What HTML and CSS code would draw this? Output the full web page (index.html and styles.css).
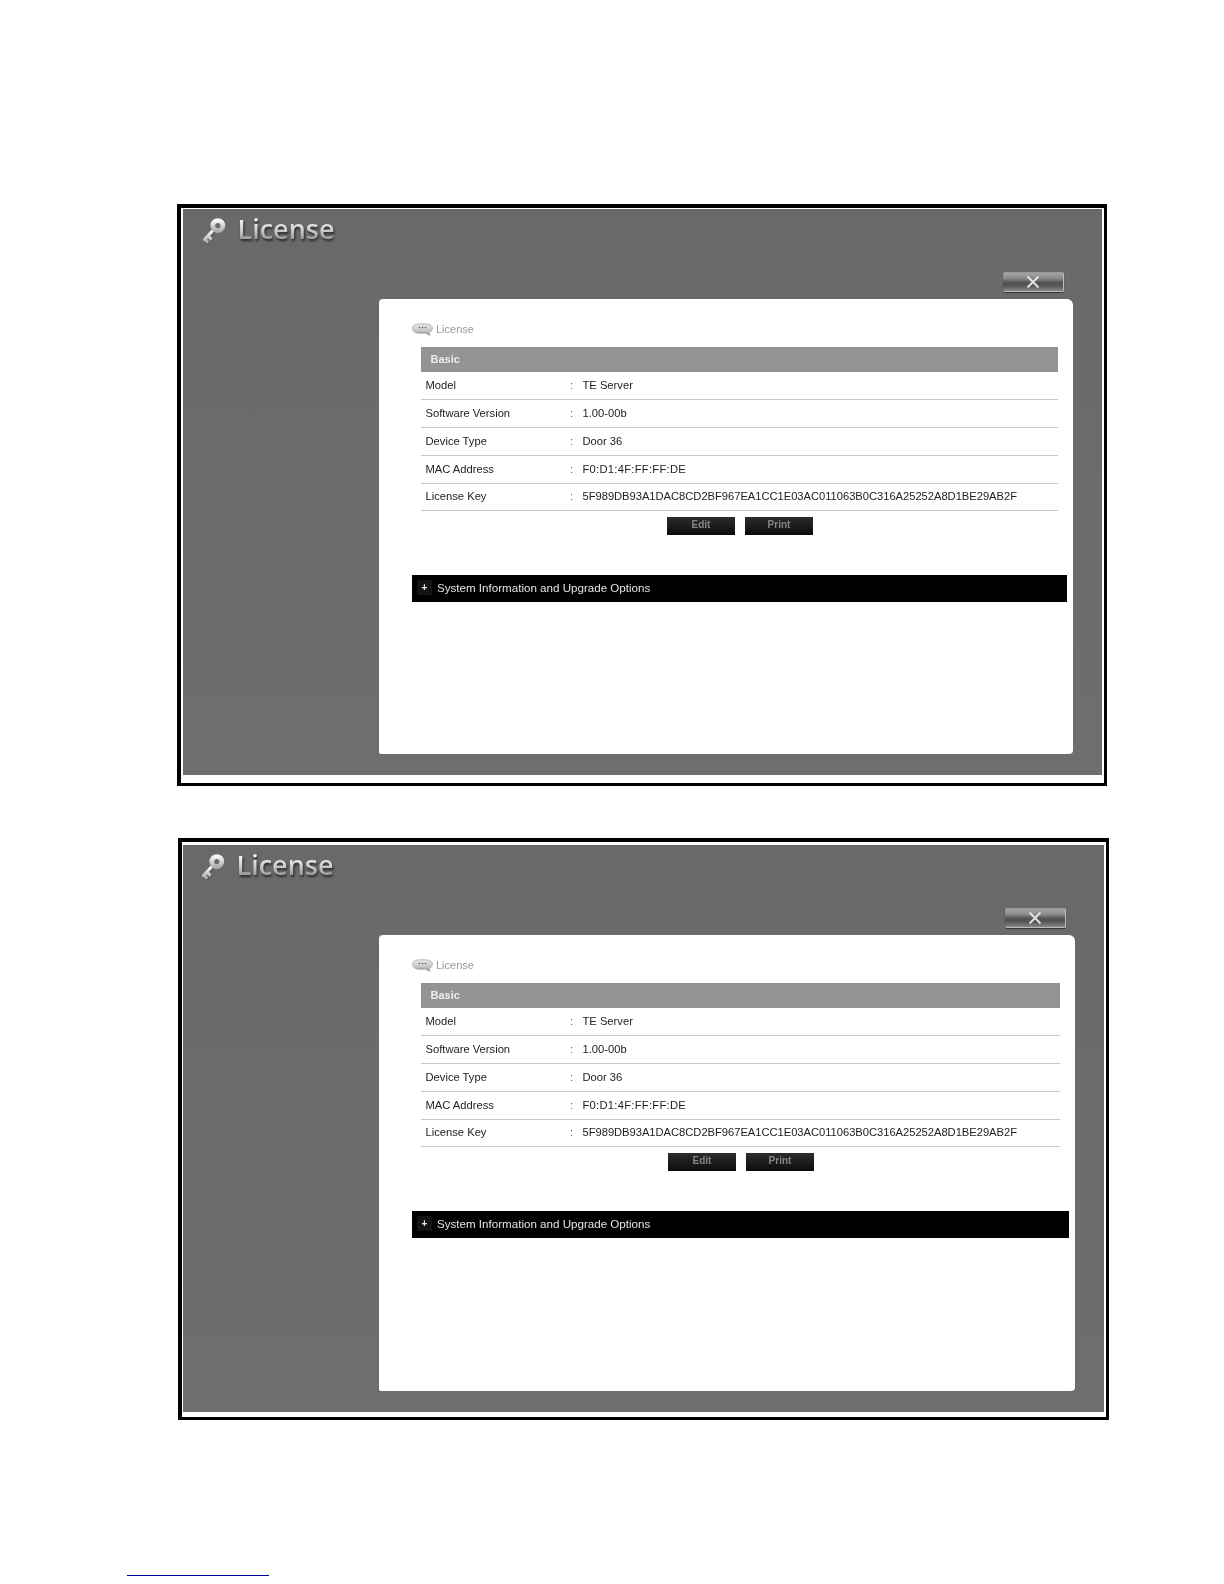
FILE: index.html
```html
<!DOCTYPE html>
<html lang="en">
<head>
<meta charset="utf-8">
<title>License</title>
<link rel="stylesheet" href="styles.css">
</head>
<body>
<svg class="defs" width="0" height="0" aria-hidden="true">
  <defs>
    <linearGradient id="keyfill" x1="0" y1="0" x2="0" y2="1">
      <stop offset="0" stop-color="#f6f6f6"/>
      <stop offset="1" stop-color="#b0b0b0"/>
    </linearGradient>
    <linearGradient id="bubblefill" x1="0" y1="0" x2="0" y2="1">
      <stop offset="0" stop-color="#e8e8e8"/>
      <stop offset=".6" stop-color="#c8c8c8"/>
      <stop offset="1" stop-color="#8e8e8e"/>
    </linearGradient>
    <symbol id="key" viewBox="0 0 25 26">
      <path d="M10 13.500 L2.800 21.200 M6 17.800 L8.800 20.400 M3.200 20.800 L5.400 23.200" fill="none" stroke="#3c3c3c" stroke-width="3.400" stroke-linecap="round" opacity=".4" transform="translate(1 1.200)"/>
      <path d="M10 13.500 L2.500 21.500 M5.800 18 L8.800 20.700 M3 21 L5.300 23.500" fill="none" stroke="url(#keyfill)" stroke-width="3.200" stroke-linecap="round"/>
      <circle cx="15.800" cy="7.600" r="5" fill="none" stroke="url(#keyfill)" stroke-width="4.800"/>
    </symbol>
    <symbol id="bubble" viewBox="0 0 21 13">
      <path d="M8 .8h5c4.500 0 7.500 1.500 7.500 4.300 0 2.200-1.600 3.600-3.500 4.300 .1 1 .6 2 1.300 2.900-1.700-.2-3.200-1-4.200-2.100-.6 .1-1.300 .1-2 .1H8C3.500 10.300 .5 8.300 .5 5.300S3.500 .8 8 .8z" fill="url(#bubblefill)" stroke="#8c8c8c" stroke-width=".5"/>
      <circle cx="7.500" cy="4.400" r=".75" fill="#555"/>
      <circle cx="10.500" cy="4.400" r=".75" fill="#555"/>
      <circle cx="13.500" cy="4.400" r=".75" fill="#555"/>
    </symbol>
    <symbol id="cross" viewBox="0 0 14 14">
      <path d="M1.500 1.500 L12.500 12.500 M12.500 1.500 L1.500 12.500" fill="none" stroke="#e4e4e4" stroke-width="1.800"/>
    </symbol>
  </defs>
</svg>

<section class="frame frame-a">
  <div class="stage">
    <header class="title-row">
      <svg class="key-icon"><use href="#key"/></svg>
      <h1 class="title">License</h1>
    </header>
    <div class="close-row">
      <button class="close-btn" type="button" aria-label="Close"><svg class="cross-icon"><use href="#cross"/></svg></button>
    </div>
    <main class="panel">
      <div class="crumb"><svg class="bubble-icon"><use href="#bubble"/></svg><span>License</span></div>
      <div class="section-head">Basic</div>
      <dl class="info">
        <div class="info-row"><dt>Model</dt><dd class="colon">:</dd><dd>TE Server</dd></div>
        <div class="info-row"><dt>Software Version</dt><dd class="colon">:</dd><dd>1.00-00b</dd></div>
        <div class="info-row"><dt>Device Type</dt><dd class="colon">:</dd><dd>Door 36</dd></div>
        <div class="info-row"><dt>MAC Address</dt><dd class="colon">:</dd><dd class="mac">F0:D1:4F:FF:FF:DE</dd></div>
        <div class="info-row"><dt>License Key</dt><dd class="colon">:</dd><dd class="license-key">5F989DB93A1DAC8CD2BF967EA1CC1E03AC011063B0C316A25252A8D1BE29AB2F</dd></div>
      </dl>
      <div class="actions">
        <button class="action-btn" type="button">Edit</button>
        <button class="action-btn" type="button">Print</button>
      </div>
      <div class="expander"><span class="plus">+</span><span>System Information and Upgrade Options</span></div>
    </main>
  </div>
</section>

<section class="frame frame-b">
  <div class="stage">
    <header class="title-row">
      <svg class="key-icon"><use href="#key"/></svg>
      <h1 class="title">License</h1>
    </header>
    <div class="close-row">
      <button class="close-btn" type="button" aria-label="Close"><svg class="cross-icon"><use href="#cross"/></svg></button>
    </div>
    <main class="panel">
      <div class="crumb"><svg class="bubble-icon"><use href="#bubble"/></svg><span>License</span></div>
      <div class="section-head">Basic</div>
      <dl class="info">
        <div class="info-row"><dt>Model</dt><dd class="colon">:</dd><dd>TE Server</dd></div>
        <div class="info-row"><dt>Software Version</dt><dd class="colon">:</dd><dd>1.00-00b</dd></div>
        <div class="info-row"><dt>Device Type</dt><dd class="colon">:</dd><dd>Door 36</dd></div>
        <div class="info-row"><dt>MAC Address</dt><dd class="colon">:</dd><dd class="mac">F0:D1:4F:FF:FF:DE</dd></div>
        <div class="info-row"><dt>License Key</dt><dd class="colon">:</dd><dd class="license-key">5F989DB93A1DAC8CD2BF967EA1CC1E03AC011063B0C316A25252A8D1BE29AB2F</dd></div>
      </dl>
      <div class="actions">
        <button class="action-btn" type="button">Edit</button>
        <button class="action-btn" type="button">Print</button>
      </div>
      <div class="expander"><span class="plus">+</span><span>System Information and Upgrade Options</span></div>
    </main>
  </div>
</section>

<hr class="foot-rule">
</body>
</html>
```

FILE: styles.css
```css
* { box-sizing: border-box; }

html, body { margin: 0; background: #fff; }

body {
  padding-top: 204px;
  font-family: "Liberation Sans", Arial, sans-serif;
  color: #222;
}

.defs { position: absolute; }

.frame {
  height: 582px;
  background: #fff;
  border: 4px solid #000;
  border-right-width: 3px;
  border-bottom-width: 3px;
  filter: blur(0.35px);
}

.frame-a {
  width: 930px;
  margin-left: 177px;
  padding: 1px 2px 8px 2px;
}

.frame-b {
  width: 931px;
  margin-top: 52px;
  margin-left: 178px;
  padding: 3px 2px 5px 1px;
}

.stage {
  display: flex;
  flex-direction: column;
  height: 100%;
  padding: 0 29px 21px 0;
  background: linear-gradient(#696969, #6e6e6e);
}

.title-row {
  display: flex;
  align-items: flex-start;
  height: 63px;
  padding: 9px 0 0 19px;
}

.frame-b .title-row { padding-left: 18px; }

.key-icon { width: 25px; height: 26px; flex: none; }

.title {
  margin: -8px 0 0 10.5px;
  font-family: "Open Sans", sans-serif;
  font-size: 27px;
  font-weight: 600;
  line-height: 38px;
  background: linear-gradient(#f8f8f8 25%, #cacaca 55%, #929292 80%);
  -webkit-background-clip: text;
  background-clip: text;
  color: transparent;
  filter: drop-shadow(1px 2px 1px rgba(20, 20, 20, 0.75));
}

.close-row {
  display: flex;
  justify-content: flex-end;
  padding-right: 9px;
  margin-bottom: 7px;
}

.close-btn {
  display: flex;
  align-items: center;
  justify-content: center;
  width: 61px;
  height: 20px;
  padding: 0;
  border: 0;
  border-top: 1px solid #9c9c9c;
  border-right: 1px solid #bcbcbc;
  border-bottom: 1px solid #bcbcbc;
  border-radius: 2px;
  background: linear-gradient(#a4a4a4, #8c8c8c 28%, #505050 55%, #585858 72%, #868686);
  box-shadow: 0 1px 1px rgba(30, 30, 30, 0.7);
}

.cross-icon { width: 14px; height: 14px; }

.panel {
  flex: 1;
  margin-left: 196px;
  background: #fff;
  border-radius: 4px 6px 4px 2px;
}

.crumb {
  display: flex;
  align-items: flex-start;
  gap: 3px;
  height: 48px;
  padding: 23.5px 0 0 33px;
  font-size: 11px;
  line-height: 13px;
  color: #999;
}

.bubble-icon { width: 21px; height: 13px; flex: none; }

.section-head {
  height: 25px;
  margin: 0 15px 0 42px;
  padding-left: 9.5px;
  background: #949494;
  font-size: 11px;
  font-weight: 700;
  line-height: 24px;
  color: #ededed;
}

.info { margin: 0 15px 0 42px; }

.info-row {
  display: grid;
  grid-template-columns: 144.5px 12.5px 1fr;
  align-items: center;
  height: 28px;
  padding: 0 0 2px 4.5px;
  border-bottom: 1px solid #c6c6c6;
  font-size: 11.2px;
  white-space: nowrap;
}

.info-row:last-child { height: 27px; }

.info-row dt, .info-row dd { margin: 0; }

.colon { color: #666; }

.mac { letter-spacing: 0.28px; }

.license-key { letter-spacing: -0.03px; }

.actions {
  display: flex;
  justify-content: center;
  gap: 10px;
  margin: 6px 15px 40px 42px;
}

.frame-b .actions { margin-bottom: 40.5px; }

.action-btn {
  width: 68px;
  height: 17.5px;
  padding: 0 0 2px 1px;
  border: 0;
  background: linear-gradient(#2c2c2c, #0c0c0c);
  font-family: inherit;
  font-size: 10px;
  font-weight: 700;
  color: #858585;
}

.expander {
  display: flex;
  align-items: center;
  gap: 5px;
  height: 27px;
  margin: 0 6px 0 33px;
  padding: 0 0 2px 5px;
  background: #000;
  font-size: 11.6px;
  color: #e4e4e4;
  white-space: nowrap;
}

.plus {
  width: 15px;
  height: 15px;
  background: #141414;
  font-size: 10px;
  font-weight: 700;
  line-height: 15px;
  text-align: center;
  color: #e8e8e8;
}

.foot-rule {
  width: 142px;
  height: 1px;
  margin: 155px 0 0 127px;
  border: 0;
  background: #00009c;
}
```
